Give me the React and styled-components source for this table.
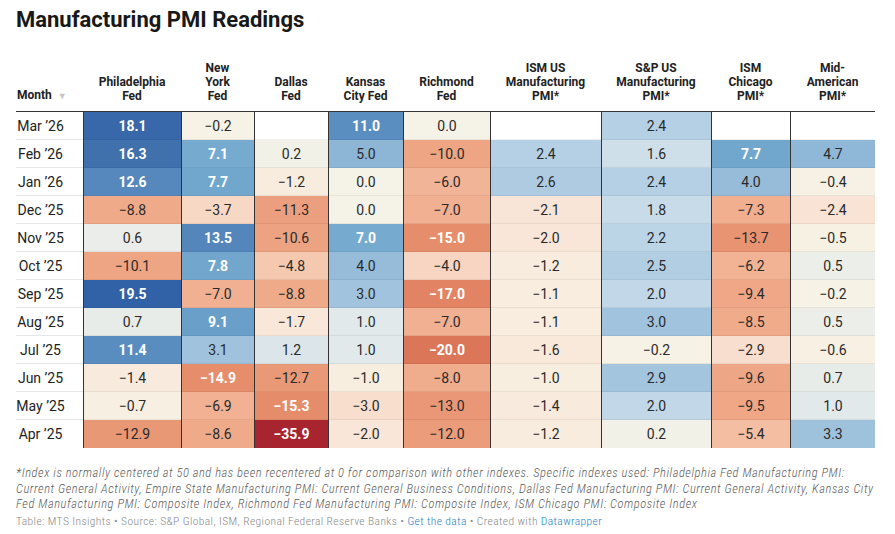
import React from 'react';
import styled, { createGlobalStyle } from 'styled-components';

const GlobalStyle = createGlobalStyle`
  body {
    margin: 0;
    background: #fff;
    font-family: Roboto, "Liberation Sans", sans-serif;
    color: #333;
  }
`;

const COLUMNS = [
  { key: 'phil', label: ['Philadelphia', 'Fed'], width: 98 },
  { key: 'ny', label: ['New', 'York', 'Fed'], width: 73 },
  { key: 'dal', label: ['Dallas', 'Fed'], width: 74 },
  { key: 'kc', label: ['Kansas', 'City Fed'], width: 75 },
  { key: 'rich', label: ['Richmond', 'Fed'], width: 87 },
  { key: 'ism', label: ['ISM US', 'Manufacturing', 'PMI*'], width: 111 },
  { key: 'sp', label: ['S&P US', 'Manufacturing', 'PMI*'], width: 110 },
  { key: 'chi', label: ['ISM', 'Chicago', 'PMI*'], width: 79 },
  { key: 'mid', label: ['Mid-', 'American', 'PMI*'], width: 85 },
];

const ROWS = [
  ["Mar \u201926", [18.1, -0.2, null, 11.0, 0.0, null, 2.4, null, null]],
  ["Feb \u201926", [16.3, 7.1, 0.2, 5.0, -10.0, 2.4, 1.6, 7.7, 4.7]],
  ["Jan \u201926", [12.6, 7.7, -1.2, 0.0, -6.0, 2.6, 2.4, 4.0, -0.4]],
  ["Dec \u201925", [-8.8, -3.7, -11.3, 0.0, -7.0, -2.1, 1.8, -7.3, -2.4]],
  ["Nov \u201925", [0.6, 13.5, -10.6, 7.0, -15.0, -2.0, 2.2, -13.7, -0.5]],
  ["Oct \u201925", [-10.1, 7.8, -4.8, 4.0, -4.0, -1.2, 2.5, -6.2, 0.5]],
  ["Sep \u201925", [19.5, -7.0, -8.8, 3.0, -17.0, -1.1, 2.0, -9.4, -0.2]],
  ["Aug \u201925", [0.7, 9.1, -1.7, 1.0, -7.0, -1.1, 3.0, -8.5, 0.5]],
  ["Jul \u201925", [11.4, 3.1, 1.2, 1.0, -20.0, -1.6, -0.2, -2.9, -0.6]],
  ["Jun \u201925", [-1.4, -14.9, -12.7, -1.0, -8.0, -1.0, 2.9, -9.6, 0.7]],
  ["May \u201925", [-0.7, -6.9, -15.3, -3.0, -13.0, -1.4, 2.0, -9.5, 1.0]],
  ["Apr \u201925", [-12.9, -8.6, -35.9, -2.0, -12.0, -1.2, 0.2, -5.4, 3.3]],
];

// diverging scale, stops picked off the chart
const STOPS = [
  [-36, '#a82430'],
  [-20, '#dc7659'],
  [-15, '#e68e6c'],
  [-10, '#eea584'],
  [-6, '#f2b496'],
  [-4, '#f7d5c2'],
  [-2, '#f9e6d8'],
  [-1, '#f8eee0'],
  [0, '#f5f3e7'],
  [1, '#e2e9ea'],
  [2, '#c2d8e8'],
  [3, '#a1c3dd'],
  [5, '#8cb5d6'],
  [7, '#77aacf'],
  [9, '#6aa0c9'],
  [11, '#5b8ec0'],
  [13.5, '#5485bb'],
  [16, '#4272ae'],
  [19.5, '#3162a8'],
];

const hex = (h) => [1, 3, 5].map((i) => parseInt(h.slice(i, i + 2), 16));

const colorFor = (v) => {
  if (v <= STOPS[0][0]) return STOPS[0][1];
  for (let i = 1; i < STOPS.length; i++) {
    const [v1, c1] = STOPS[i];
    if (v <= v1) {
      const [v0, c0] = STOPS[i - 1];
      const t = (v - v0) / (v1 - v0);
      const a = hex(c0);
      const b = hex(c1);
      const m = a.map((x, j) => Math.round(x + (b[j] - x) * t));
      return `rgb(${m.join(',')})`;
    }
  }
  return STOPS[STOPS.length - 1][1];
};

const fmt = (v) => v.toFixed(1).replace('-', '\u2212');

const GRID = `67px ${COLUMNS.map((c) => c.width + 'px').join(' ')}`;

const Page = styled.div`
  padding: 7px 20px 0 16px;
`;

const Title = styled.h1`
  margin: 0;
  font-size: 22px;
  line-height: 26px;
  font-weight: 700;
  color: #181818;
`;

const Table = styled.div`
  width: 859px;
`;

const HeaderRow = styled.div`
  display: grid;
  grid-template-columns: ${GRID};
  height: 78px;
  border-bottom: 1px solid #333;
`;

const HeadCell = styled.div`
  display: flex;
  flex-direction: column;
  justify-content: flex-end;
  align-items: ${(p) => (p.$left ? 'flex-start' : 'center')};
  padding: 0 0 8px ${(p) => (p.$left ? '1px' : '0')};
  font-size: 12px;
  line-height: 14px;
  font-weight: 700;
  color: #222;
  text-align: center;
`;

const SortArrow = styled.span`
  color: #c4c4c4;
  font-size: 9px;
  margin-left: 6px;
`;

const Row = styled.div`
  display: grid;
  grid-template-columns: ${GRID};
  height: 28px;
`;

const MonthCell = styled.div`
  display: flex;
  align-items: center;
  justify-content: center;
  padding-right: 18px;
  font-size: 14px;
  color: #222;
  border-bottom: ${(p) => (p.$last ? 'none' : '1px solid #e6e6e6')};
`;

const ValueCell = styled.div`
  display: flex;
  align-items: center;
  justify-content: center;
  font-size: 14px;
  border-left: 1px solid #333;
  box-shadow: ${(p) => (p.$last ? 'none' : 'inset 0 -1px 0 rgba(0, 0, 0, 0.06)')};
  background: ${(p) => p.$bg};
  color: ${(p) => (p.$light ? '#fff' : '#2a2a2a')};
  font-weight: ${(p) => (p.$light ? 700 : 400)};
`;

const Notes = styled.p`
  margin: 17px 0 0;
  font-family: Roboto, sans-serif;
  font-stretch: condensed;
  font-style: italic;
  font-weight: 300;
  font-size: 12.5px;
  letter-spacing: 0.55px;
  line-height: 15.5px;
  white-space: nowrap;
  color: #5d5d5d;
`;

const Byline = styled.div`
  margin-top: 2px;
  font-family: Roboto, sans-serif;
  font-stretch: condensed;
  font-weight: 300;
  font-size: 11.5px;
  letter-spacing: 0.4px;
  color: #888;
`;

const Link = styled.a`
  color: #1d81c8;
  text-decoration: none;
`;

export default function App() {
  return (
    <Page>
      <GlobalStyle />
      <Title>Manufacturing PMI Readings</Title>
      <Table>
        <HeaderRow>
          <HeadCell $left>
            <span>
              Month<SortArrow>▼</SortArrow>
            </span>
          </HeadCell>
          {COLUMNS.map((c) => (
            <HeadCell key={c.key}>
              {c.label.map((l) => (
                <span key={l}>{l}</span>
              ))}
            </HeadCell>
          ))}
        </HeaderRow>
        {ROWS.map(([month, values], ri) => {
          const last = ri === ROWS.length - 1;
          return (
            <Row key={month}>
              <MonthCell $last={last}>{month}</MonthCell>
              {values.map((v, ci) =>
                v === null ? (
                  <ValueCell key={ci} $bg="#fff" $last={last} />
                ) : (
                  <ValueCell
                    key={ci}
                    $bg={colorFor(v)}
                    $light={v >= 7 || v <= -14.9}
                    $last={last}
                  >
                    {fmt(v)}
                  </ValueCell>
                )
              )}
            </Row>
          );
        })}
      </Table>
      <Notes>
        *Index is normally centered at 50 and has been recentered at 0 for comparison with other indexes. Specific indexes used: Philadelphia Fed Manufacturing PMI:
        <br />
        Current General Activity, Empire State Manufacturing PMI: Current General Business Conditions, Dallas Fed Manufacturing PMI: Current General Activity, Kansas City
        <br />
        Fed Manufacturing PMI: Composite Index, Richmond Fed Manufacturing PMI: Composite Index, ISM Chicago PMI: Composite Index
      </Notes>
      <Byline>
        Table: MTS Insights • Source: S&amp;P Global, ISM, Regional Federal Reserve Banks • <Link href="#">Get the data</Link> • Created with <Link href="#">Datawrapper</Link>
      </Byline>
    </Page>
  );
}
